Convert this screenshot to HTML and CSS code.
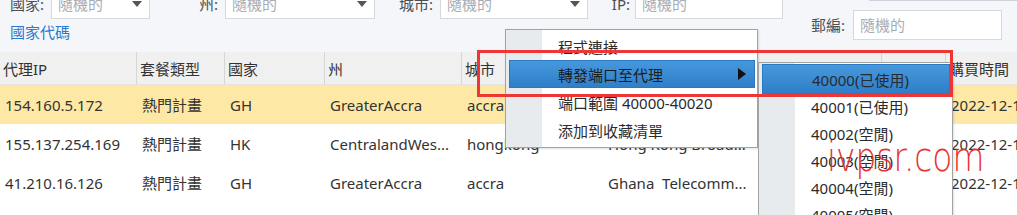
FILE: index.html
```html
<!DOCTYPE html>
<html lang="zh-Hant">
<head>
<meta charset="utf-8">
<title>代理列表</title>
<link rel="stylesheet" href="styles.css">
</head>
<body>
<div class="page">
  <div class="filters">
    <div class="filters-left">
      <div class="filter-row">
        <span class="lbl lbl-country">國家:</span>
        <div class="input select w-country"><span class="ph">隨機的</span><span class="caret"></span></div>
        <span class="lbl lbl-state">州:</span>
        <div class="input select w-state"><span class="ph">隨機的</span><span class="caret"></span></div>
        <span class="lbl lbl-city">城市:</span>
        <div class="input select w-city"><span class="ph">隨機的</span><span class="caret"></span></div>
        <span class="lbl lbl-ip">IP:</span>
        <div class="input w-ip"><span class="ph">隨機的</span></div>
      </div>
      <a class="code-link" href="#">國家代碼</a>
    </div>
    <div class="filters-right">
      <div class="edge-line"></div>
      <div class="zip-row">
        <span class="lbl">郵編:</span>
        <div class="input w-zip"><span class="ph">隨機的</span></div>
      </div>
    </div>
  </div>

  <div class="grid">
    <div class="th">代理IP</div>
    <div class="th">套餐類型</div>
    <div class="th">國家</div>
    <div class="th">州</div>
    <div class="th">城市</div>
    <div class="th"></div>
    <div class="th"></div>
    <div class="th last">購買時間</div>

    <div class="td sel">154.160.5.172</div>
    <div class="td sel">熱門計畫</div>
    <div class="td sel">GH</div>
    <div class="td sel">GreaterAccra</div>
    <div class="td sel">accra</div>
    <div class="td sel"></div>
    <div class="td sel"></div>
    <div class="td sel last">2022-12-1</div>

    <div class="td">155.137.254.169</div>
    <div class="td">熱門計畫</div>
    <div class="td">HK</div>
    <div class="td">CentralandWes...</div>
    <div class="td">hongkong</div>
    <div class="td">Hong Kong Broad...</div>
    <div class="td"></div>
    <div class="td last">2022-12-1</div>

    <div class="td">41.210.16.126</div>
    <div class="td">熱門計畫</div>
    <div class="td">GH</div>
    <div class="td">GreaterAccra</div>
    <div class="td">accra</div>
    <div class="td">Ghana  Telecomm...</div>
    <div class="td"></div>
    <div class="td last">2022-12-1</div>
  </div>
</div>

<div class="menu">
  <div class="item">程式連接</div>
  <div class="item active">轉發端口至代理<span class="sub-arrow"></span></div>
  <div class="item">端口範圍 40000-40020</div>
  <div class="item">添加到收藏清單</div>
</div>

<div class="submenu">
  <div class="item active">40000(已使用)</div>
  <div class="item">40001(已使用)</div>
  <div class="item">40002(空閒)</div>
  <div class="item">40003(空閒)</div>
  <div class="item">40004(空閒)</div>
  <div class="item">40005(空閒)</div>
</div>

<div class="annot"></div>
<div class="watermark">ivpsr.com</div>
</body>
</html>
```

FILE: styles.css
```css
html, body {
  margin: 0;
  padding: 0;
}
body {
  width: 1017px;
  height: 215px;
  overflow: hidden;
  background: #f4f6f9;
  font-family: "Noto Sans", "Noto Sans CJK TC", sans-serif;
  font-size: 15px;
  color: #333;
  position: relative;
}

/* ---------- filters ---------- */
.filters {
  height: 52px;
  display: flex;
  overflow: visible;
}
.filters-left {
  padding-left: 10px;
  margin-top: -11px;
  display: flex;
  flex-direction: column;
}
.filter-row {
  display: flex;
  align-items: center;
  height: 30px;
}
.lbl {
  color: #4a4f57;
  font-size: 15px;
  line-height: 20px;
  white-space: nowrap;
}
.lbl-country { width: 35px; }
.lbl-state { width: 68px; text-align: right; }
.lbl-city { width: 58px; text-align: right; }
.lbl-ip { width: 42px; text-align: right; }
.lbl-country + .input { margin-left: 6px; }
.lbl-state + .input, .lbl-city + .input { margin-left: 7px; }
.lbl-ip + .input { margin-left: 5px; }

.input {
  box-sizing: border-box;
  height: 30px;
  background: #fff;
  border: 1px solid #d5d9de;
  display: flex;
  align-items: center;
  padding-left: 6px;
  position: relative;
}
.ph {
  color: #a8adb4;
  font-size: 15px;
  line-height: 20px;
}
.caret {
  margin-left: auto;
  margin-right: 7px;
  width: 0;
  height: 0;
  border-left: 5px solid transparent;
  border-right: 5px solid transparent;
  border-top: 6px solid #555;
}
.w-country { width: 99px; }
.w-state { width: 150px; }
.w-city { width: 148px; }
.w-ip { width: 148px; }
.w-zip { width: 149px; }

.code-link {
  margin-top: 3px;
  color: #2a78cf;
  text-decoration: none;
  font-size: 15px;
  line-height: 20px;
}

.filters-right {
  margin-left: auto;
  padding-right: 15px;
  display: flex;
  flex-direction: column;
}
.edge-line {
  height: 1px;
  background: #cfd3d8;
  margin-left: 58px;
  margin-right: -15px;
}
.zip-row {
  margin-top: 9px;
  display: flex;
  align-items: center;
}
.zip-row .input { margin-left: 8px; }

/* ---------- grid ---------- */
.grid {
  display: grid;
  grid-template-columns: 137px 88px 100px 137px 141px 279px 64px 1fr;
  grid-template-rows: 33px 39px 39px 39px;
  background: #fff;
  height: 163px;
}
.th {
  background: #f0f0f0;
  border-right: 1px solid #d6d6d6;
  border-bottom: 1px solid #e4e4e4;
  box-sizing: border-box;
  padding-left: 3px;
  display: flex;
  align-items: center;
  color: #333;
  white-space: nowrap;
  overflow: hidden;
}
.th.last { border-right: none; }
.td {
  padding-left: 5px;
  display: flex;
  align-items: center;
  white-space: pre;
  overflow: hidden;
  color: #333;
}
.td.sel { background: #fde8a6; }

/* ---------- context menus ---------- */
.menu, .submenu {
  position: absolute;
  box-sizing: border-box;
  border: 1px solid #a3a3a3;
  background: linear-gradient(to right, #e8ebee 0, #e8ebee 36px, #fff 36px);
  box-shadow: 1px 1px 2px rgba(0,0,0,0.12);
}
.menu {
  left: 505px;
  top: 29px;
  width: 253px;
  height: 119px;
  padding: 2px 2px 0 3px;
}
.menu .item {
  height: 28px;
  box-sizing: border-box;
  padding-left: 49px;
  display: flex;
  align-items: center;
  color: #2b2b2b;
  white-space: nowrap;
}
.item.active {
  background: linear-gradient(#4698dc, #2f7fc9);
  border: 1px solid #2c79c2;
  padding-left: 48px;
  color: #1c1c1c;
}
.sub-arrow {
  margin-left: auto;
  margin-right: 8px;
  width: 0;
  height: 0;
  border-top: 6px solid transparent;
  border-bottom: 6px solid transparent;
  border-left: 8px solid #111;
}

.submenu {
  left: 758px;
  top: 62px;
  width: 195px;
  height: 170px;
  padding: 3px 2px 0 3px;
}
.submenu .item {
  height: 27px;
  box-sizing: border-box;
  padding-left: 49px;
  display: flex;
  align-items: center;
  color: #2b2b2b;
  white-space: nowrap;
}
.submenu .item.active {
  height: 30px;
  margin-top: -2px;
  margin-bottom: -1px;
}

/* ---------- annotation overlays ---------- */
.annot {
  position: absolute;
  left: 477px;
  top: 50px;
  width: 476px;
  height: 47px;
  box-sizing: border-box;
  border: 3px solid #ee3636;
}
.watermark {
  position: absolute;
  left: 827px;
  top: 137px;
  font-family: "DejaVu Sans", sans-serif;
  font-weight: 200;
  font-size: 40px;
  line-height: 40px;
  color: #e8322f;
  transform: scaleX(0.82);
  transform-origin: left top;
  white-space: nowrap;
}
```
